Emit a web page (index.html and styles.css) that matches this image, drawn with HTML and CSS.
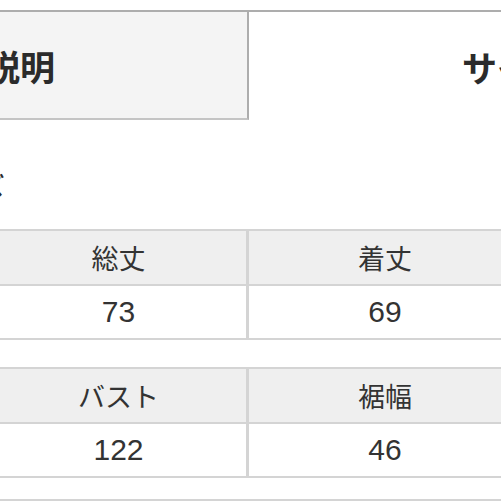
FILE: index.html
```html
<!DOCTYPE html>
<html lang="ja">
<head>
<meta charset="utf-8">
<link rel="stylesheet" href="styles.css">
</head>
<body>
<div class="page">
  <div class="desc">
    <div class="desc-label"><span class="desc-text">商品説明</span></div>
    <div class="desc-value"><span class="desc-size">サイズ</span></div>
  </div>
  <div class="section-title"><span class="title-text">サイズ</span></div>
  <div class="size-table">
    <div class="cell head">総丈</div>
    <div class="cell head">着丈</div>
    <div class="cell val">73</div>
    <div class="cell val">69</div>
  </div>
  <div class="size-table second">
    <div class="cell head">バスト</div>
    <div class="cell head">裾幅</div>
    <div class="cell val">122</div>
    <div class="cell val">46</div>
  </div>
  <div class="next-table"></div>
</div>
</body>
</html>
```

FILE: styles.css
```css
html, body {
  margin: 0;
  padding: 0;
  background: #ffffff;
  overflow: hidden;
}
body {
  font-family: "Noto Sans CJK JP", "Noto Sans", sans-serif;
  color: #333333;
}
.page {
  margin-left: -9px;
  width: 530px;
  padding-top: 10px;
}
.desc {
  display: grid;
  grid-template-columns: 258px 1fr;
  border-top: 2px solid #adadad;
}
.desc-label {
  height: 106px;
  background: #f4f4f4;
  border-right: 2px solid #adadad;
  border-bottom: 2px solid #c4c4c4;
  display: flex;
  align-items: center;
  font-size: 35px;
  font-weight: bold;
  color: #2b2b2b;
  white-space: nowrap;
}
.desc-text {
  margin-left: -76px;
}
.desc-value {
  display: flex;
  align-items: center;
  font-size: 35px;
  font-weight: bold;
  color: #2b2b2b;
  padding-left: 213px;
  white-space: nowrap;
  height: 108px;
  overflow: hidden;
}
.section-title {
  height: 109px;
  display: flex;
  align-items: center;
  font-size: 24px;
  font-weight: bold;
  color: #2b2b2b;
  white-space: nowrap;
}
.title-text {
  margin-left: -58px;
  padding-top: 20px;
}
.size-table {
  display: grid;
  grid-template-columns: 258px 272px;
  border-top: 2px solid #d4d4d4;
}
.second {
  margin-top: 27px;
}
.next-table {
  margin-top: 21px;
  border-top: 2px solid #d4d4d4;
  height: 20px;
}
.cell {
  display: flex;
  align-items: center;
  justify-content: center;
  font-size: 27px;
  color: #333333;
  border-bottom: 2px solid #d4d4d4;
}
.cell:nth-child(odd) {
  border-right: 3px solid #d4d4d4;
}
.head {
  height: 53px;
  background: #efefef;
}
.val {
  height: 52px;
  background: #ffffff;
  font-family: "Liberation Sans", "Noto Sans", sans-serif;
  font-size: 30px;
}
```
